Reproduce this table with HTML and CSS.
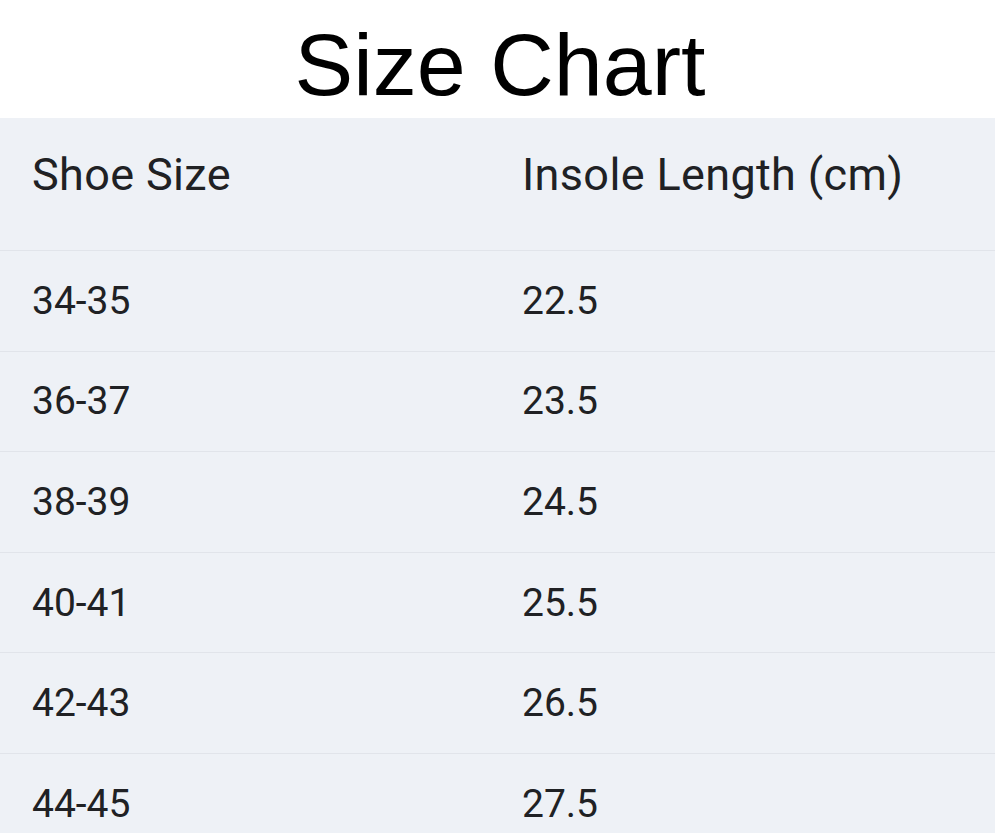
FILE: index.html
```html
<!DOCTYPE html>
<html lang="en">
<head>
<meta charset="utf-8">
<title>Size Chart</title>
<link rel="stylesheet" href="styles.css">
</head>
<body>
  <h1 class="title">Size Chart</h1>
  <div class="chart">
    <div class="head">
      <div class="cell">Shoe Size</div>
      <div class="cell">Insole Length (cm)</div>
    </div>
    <div class="row"><div class="cell">34-35</div><div class="cell">22.5</div></div>
    <div class="row"><div class="cell">36-37</div><div class="cell">23.5</div></div>
    <div class="row"><div class="cell">38-39</div><div class="cell">24.5</div></div>
    <div class="row"><div class="cell">40-41</div><div class="cell">25.5</div></div>
    <div class="row"><div class="cell">42-43</div><div class="cell">26.5</div></div>
    <div class="row"><div class="cell">44-45</div><div class="cell">27.5</div></div>
  </div>
</body>
</html>
```
FILE: styles.css
```css
html, body {
  margin: 0;
  padding: 0;
  background: #ffffff;
  overflow: hidden;
}
.title {
  margin: 0;
  height: 118px;
  box-sizing: border-box;
  padding-top: 12px;
  line-height: 106px;
  font-family: "Liberation Sans", Arial, sans-serif;
  font-weight: normal;
  font-size: 88px;
  text-align: center;
  color: #000000;
}
.chart {
  width: 995px;
  background: #eef1f6;
  color: #202124;
  font-family: Roboto, "Noto Sans", sans-serif;
}
.head {
  display: grid;
  grid-template-columns: 490px 1fr;
  height: 132px;
  box-sizing: border-box;
  padding-top: 30px;
  font-size: 45px;
  line-height: 54px;
  letter-spacing: 0.35px;
}
.row {
  display: grid;
  grid-template-columns: 490px 1fr;
  align-items: center;
  height: 100.6px;
  box-sizing: border-box;
  border-top: 1px solid #e1e4ea;
  font-size: 39px;
  line-height: 46px;
}
.cell {
  padding-left: 32px;
}
```
